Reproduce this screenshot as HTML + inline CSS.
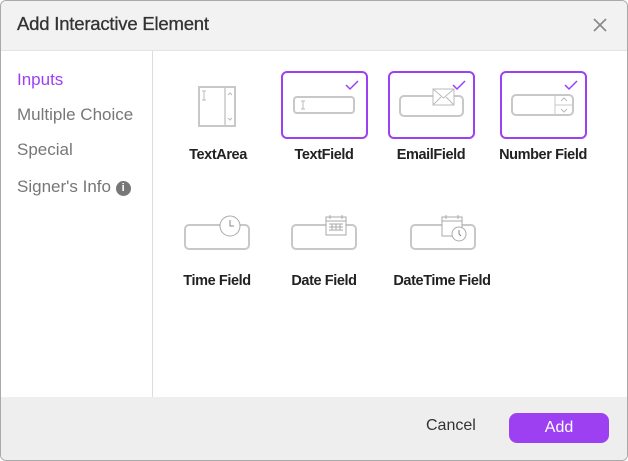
<!DOCTYPE html>
<html><head><meta charset="utf-8"><style>
*{box-sizing:border-box;margin:0;padding:0}
body{width:628px;height:461px;background:#fff;font-family:"Liberation Sans",sans-serif;position:relative;overflow:hidden}
.frame{position:absolute;left:0;top:0;width:628px;height:461px;border:1px solid #a9a9a9;border-radius:6px;overflow:hidden;background:#fff}
.hdr{position:absolute;left:0;top:0;width:100%;height:50px;background:#f2f2f2;border-bottom:1px solid #e4e4e4}
.hdr h1{position:absolute;left:16px;top:12px;font-size:18.5px;font-weight:normal;color:#333;letter-spacing:-0.2px;-webkit-text-stroke:0.3px #333}
.side{position:absolute;left:0;top:50px;width:152px;height:346px;border-right:1px solid #ddd}
.side div{position:absolute;left:16px;font-size:17px;color:#777}
.foot{position:absolute;left:0;top:396px;width:100%;height:65px;background:#eeeeee}
.cancel{position:absolute;left:425px;top:20px;font-size:16px;color:#333}
.add{position:absolute;left:508px;top:16px;width:100px;height:30px;background:#9d40f2;border-radius:8px;color:#fff;font-size:16px;text-align:center;line-height:30px}
.card{position:absolute;width:87px;height:68px;border:2px solid #9d40f2;border-radius:6px}
.lbl{position:absolute;font-size:14.5px;font-weight:bold;color:#222;text-align:center;width:130px;letter-spacing:-0.4px}
svg{position:absolute}
</style></head><body>
<div class="frame">
<div class="hdr"><h1>Add Interactive Element</h1>
<svg style="left:591px;top:16px" width="16" height="16" viewBox="0 0 16 16"><path d="M2 2L14 14M14 2L2 14" stroke="#888" stroke-width="1.6"/></svg></div>
<div class="side">
<div style="top:19px;color:#9d40f2">Inputs</div>
<div style="top:54px">Multiple Choice</div>
<div style="top:89px">Special</div>
<div style="top:126px">Signer's Info <span style="display:inline-block;width:15px;height:15px;border-radius:50%;background:#777;color:#fff;font-size:11px;font-weight:bold;text-align:center;line-height:15px;vertical-align:1px">i</span></div>
</div>

<!-- TextArea -->
<svg style="left:196px;top:85px" width="42" height="42" viewBox="0 0 42 42"><rect x="2" y="1" width="36" height="39" fill="none" stroke="#c8c8c8" stroke-width="2"/><line x1="28" y1="1" x2="28" y2="40" stroke="#c8c8c8" stroke-width="1.5"/><path d="M31 9l2-2 2 2M31 32l2 2 2-2" stroke="#bbb" fill="none"/><path d="M5 5h4M7 5v9M5 14h4" stroke="#bbb"/></svg>
<div class="lbl" style="left:152px;top:146px">TextArea</div>

<div class="card" style="left:280px;top:70px"></div>
<svg style="left:280px;top:70px" width="87" height="68"><path d="M65 14l4 4 8-8" stroke="#9d40f2" stroke-width="1.5" fill="none"/><rect x="13" y="26" width="60" height="16" rx="3" fill="none" stroke="#c8c8c8" stroke-width="2"/><path d="M20 30h4M22 30v8M20 38h4" stroke="#bbb"/></svg>
<div class="lbl" style="left:258px;top:146px">TextField</div>

<div class="card" style="left:387px;top:70px"></div>
<svg style="left:387px;top:70px" width="87" height="68"><path d="M65 14l4 4 8-8" stroke="#9d40f2" stroke-width="1.5" fill="none"/><rect x="12" y="25" width="63" height="20" rx="4" fill="none" stroke="#c8c8c8" stroke-width="2"/><rect x="45" y="18" width="21" height="16" fill="#fff" stroke="#bbb"/><path d="M45 18l10.5 9 10.5-9M45 34l8-8M66 34l-8-8" stroke="#bbb" fill="none"/></svg>
<div class="lbl" style="left:365px;top:146px">EmailField</div>

<div class="card" style="left:499px;top:70px"></div>
<svg style="left:499px;top:70px" width="87" height="68"><path d="M65 14l4 4 8-8" stroke="#9d40f2" stroke-width="1.5" fill="none"/><rect x="12" y="24" width="61" height="20" rx="4" fill="none" stroke="#c8c8c8" stroke-width="2"/><line x1="55" y1="24" x2="55" y2="44" stroke="#c8c8c8"/><line x1="55" y1="34" x2="73" y2="34" stroke="#c8c8c8"/><path d="M61 30l3-3 3 3M61 38l3 3 3-3" stroke="#bbb" fill="none"/></svg>
<div class="lbl" style="left:477px;top:146px">Number Field</div>

<!-- row 2 -->
<svg style="left:183px;top:213px" width="68" height="37"><rect x="1" y="11" width="64" height="24" rx="4" fill="none" stroke="#c8c8c8" stroke-width="2"/><circle cx="46" cy="12" r="10" fill="#fff" stroke="#aaa"/><path d="M46 6v6h4" stroke="#888" fill="none"/></svg>
<div class="lbl" style="left:151px;top:272px">Time Field</div>

<svg style="left:290px;top:213px" width="68" height="37"><rect x="1" y="11" width="64" height="24" rx="4" fill="none" stroke="#c8c8c8" stroke-width="2"/><rect x="35" y="3" width="20" height="18" fill="#fff" stroke="#aaa"/><path d="M39 1v4M51 1v4M35 7h20M38 10h14M38 13h14M38 16h14M41 10v6M45 10v6M49 10v6" stroke="#aaa" fill="none"/></svg>
<div class="lbl" style="left:258px;top:272px">Date Field</div>

<svg style="left:409px;top:211px" width="68" height="40"><rect x="1" y="13" width="64" height="24" rx="4" fill="none" stroke="#c8c8c8" stroke-width="2"/><rect x="32" y="5" width="20" height="19" fill="#fff" stroke="#aaa"/><path d="M36 3v4M48 3v4M32 9h20" stroke="#aaa"/><circle cx="49" cy="22" r="7" fill="#fff" stroke="#aaa"/><path d="M49 18v4l2 2" stroke="#888" fill="none"/></svg>
<div class="lbl" style="left:376px;top:272px">DateTime Field</div>

<div class="foot"><div class="cancel">Cancel</div><div class="add">Add</div></div>
</div>
</body></html>
